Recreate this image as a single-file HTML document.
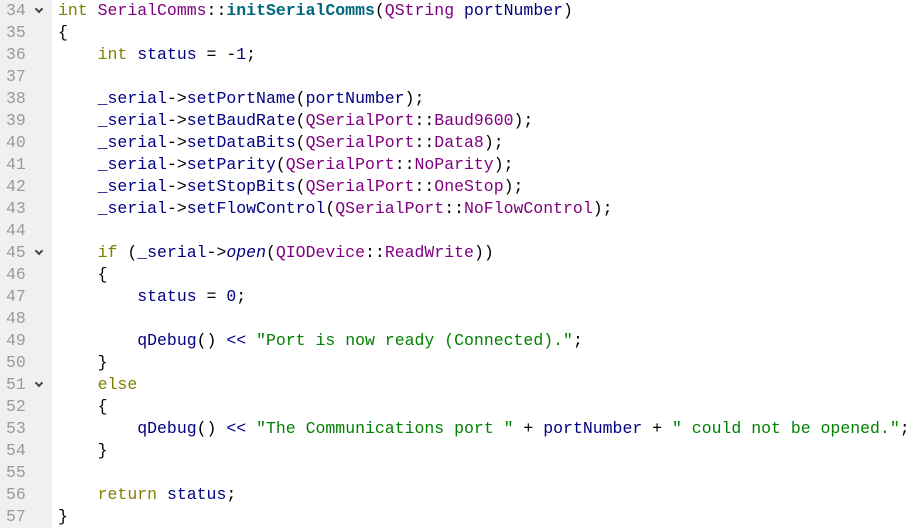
<!DOCTYPE html>
<html><head><style>
body{margin:0;width:921px;height:528px;background:#fff;overflow:hidden;font-family:"Liberation Mono",monospace;font-size:16.5px;}
#g{position:absolute;left:0;top:0;width:52px;height:528px;background:#f0f0f0;}
.l{position:absolute;left:0;height:22px;line-height:22px;white-space:pre;width:921px;}
.n{position:absolute;left:6px;color:#9a9a9a;}
.a{position:absolute;left:36px;top:6px;width:4px;height:4px;border-right:2px solid #444;border-bottom:2px solid #444;transform:rotate(45deg);}
.c{position:absolute;left:58px;color:#000;}
.k{color:#808000}.t{color:#800080}.f{color:#00677c;font-weight:bold}.i{color:#000080}.s{color:#008000}.it{font-style:italic;color:#000080}
</style></head><body><div id="g"></div>
<div class="l" style="top:0"><span class="n">34</span><span class="a"></span><span class="c"><span class="k">int</span> <span class="t">SerialComms</span>::<span class="f">initSerialComms</span>(<span class="t">QString</span> <span class="i">portNumber</span>)</span></div>
<div class="l" style="top:22px"><span class="n">35</span><span class="c">{</span></div>
<div class="l" style="top:44px"><span class="n">36</span><span class="c">    <span class="k">int</span> <span class="i">status</span> = -<span class="i">1</span>;</span></div>
<div class="l" style="top:66px"><span class="n">37</span></div>
<div class="l" style="top:88px"><span class="n">38</span><span class="c">    <span class="i">_serial</span>-&gt;<span class="i">setPortName</span>(<span class="i">portNumber</span>);</span></div>
<div class="l" style="top:110px"><span class="n">39</span><span class="c">    <span class="i">_serial</span>-&gt;<span class="i">setBaudRate</span>(<span class="t">QSerialPort</span>::<span class="t">Baud9600</span>);</span></div>
<div class="l" style="top:132px"><span class="n">40</span><span class="c">    <span class="i">_serial</span>-&gt;<span class="i">setDataBits</span>(<span class="t">QSerialPort</span>::<span class="t">Data8</span>);</span></div>
<div class="l" style="top:154px"><span class="n">41</span><span class="c">    <span class="i">_serial</span>-&gt;<span class="i">setParity</span>(<span class="t">QSerialPort</span>::<span class="t">NoParity</span>);</span></div>
<div class="l" style="top:176px"><span class="n">42</span><span class="c">    <span class="i">_serial</span>-&gt;<span class="i">setStopBits</span>(<span class="t">QSerialPort</span>::<span class="t">OneStop</span>);</span></div>
<div class="l" style="top:198px"><span class="n">43</span><span class="c">    <span class="i">_serial</span>-&gt;<span class="i">setFlowControl</span>(<span class="t">QSerialPort</span>::<span class="t">NoFlowControl</span>);</span></div>
<div class="l" style="top:220px"><span class="n">44</span></div>
<div class="l" style="top:242px"><span class="n">45</span><span class="a"></span><span class="c">    <span class="k">if</span> (<span class="i">_serial</span>-&gt;<span class="it">open</span>(<span class="t">QIODevice</span>::<span class="t">ReadWrite</span>))</span></div>
<div class="l" style="top:264px"><span class="n">46</span><span class="c">    {</span></div>
<div class="l" style="top:286px"><span class="n">47</span><span class="c">        <span class="i">status</span> = <span class="i">0</span>;</span></div>
<div class="l" style="top:308px"><span class="n">48</span></div>
<div class="l" style="top:330px"><span class="n">49</span><span class="c">        <span class="i">qDebug</span>() <span class="i">&lt;&lt;</span> <span class="s">"Port is now ready (Connected)."</span>;</span></div>
<div class="l" style="top:352px"><span class="n">50</span><span class="c">    }</span></div>
<div class="l" style="top:374px"><span class="n">51</span><span class="a"></span><span class="c">    <span class="k">else</span></span></div>
<div class="l" style="top:396px"><span class="n">52</span><span class="c">    {</span></div>
<div class="l" style="top:418px"><span class="n">53</span><span class="c">        <span class="i">qDebug</span>() <span class="i">&lt;&lt;</span> <span class="s">"The Communications port "</span> + <span class="i">portNumber</span> + <span class="s">" could not be opened."</span>;</span></div>
<div class="l" style="top:440px"><span class="n">54</span><span class="c">    }</span></div>
<div class="l" style="top:462px"><span class="n">55</span></div>
<div class="l" style="top:484px"><span class="n">56</span><span class="c">    <span class="k">return</span> <span class="i">status</span>;</span></div>
<div class="l" style="top:506px"><span class="n">57</span><span class="c">}</span></div>
</body></html>
